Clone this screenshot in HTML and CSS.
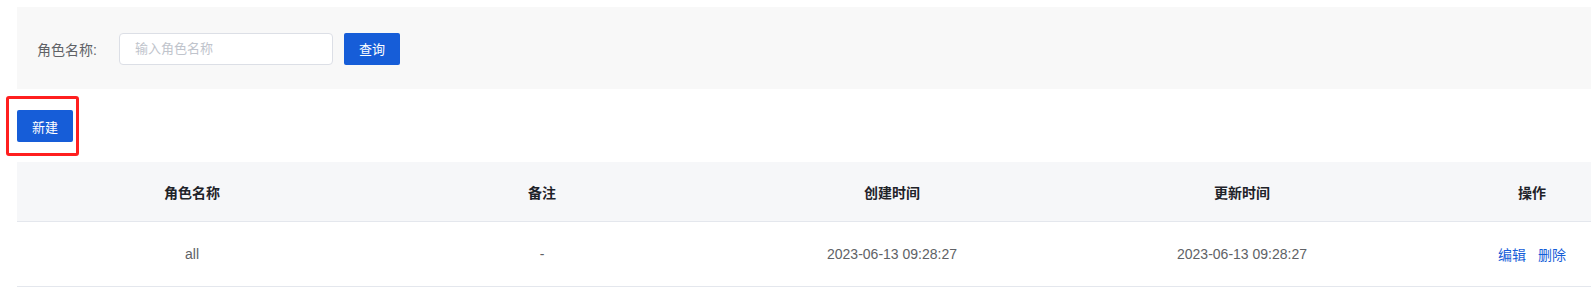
FILE: index.html
```html
<!DOCTYPE html>
<html lang="zh-CN">
<head>
  <title>角色管理</title>
  <meta charset="UTF-8">
  <link rel="stylesheet" href="styles.css">
</head>
<body>
  <div class="page">
    <div class="search-panel">
      <label class="search-label" for="role-name">角色名称:</label>
      <input type="text" id="role-name" class="search-input" placeholder="输入角色名称">
      <button type="button" class="btn">查询</button>
    </div>

    <div class="toolbar">
      <button type="button" class="btn">新建</button>
      <span class="highlight-box"></span>
    </div>

    <table class="role-table">
      <colgroup>
        <col class="col-main">
        <col class="col-main">
        <col class="col-main">
        <col class="col-main">
        <col class="col-ops">
      </colgroup>
      <thead>
        <tr>
          <th>角色名称</th>
          <th>备注</th>
          <th>创建时间</th>
          <th>更新时间</th>
          <th>操作</th>
        </tr>
      </thead>
      <tbody>
        <tr>
          <td>all</td>
          <td>-</td>
          <td>2023-06-13 09:28:27</td>
          <td>2023-06-13 09:28:27</td>
          <td class="ops"><a href="#">编辑</a><a href="#">删除</a></td>
        </tr>
      </tbody>
    </table>
  </div>
</body>
</html>
```

FILE: styles.css
```css
:root {
  --primary: #165dd8;
  --text: #606266;
  --heading: #1f2329;
  --border: #e4e7ed;
  --panel-bg: #f8f8f8;
  --head-bg: #f6f7f9;
}

html, body {
  margin: 0;
  padding: 0;
  overflow: hidden;
  background: #ffffff;
}

body {
  font-family: "Liberation Sans", Arial, "Noto Sans CJK SC", sans-serif;
  font-size: 14px;
  color: var(--text);
}

.page {
  width: 1630px;
  padding: 7px 0 0 17px;
}

.search-panel {
  display: flex;
  align-items: center;
  height: 82px;
  padding: 1px 0 0 20px;
  box-sizing: border-box;
  background-color: var(--panel-bg);
}

.search-label {
  font-size: 14px;
  color: var(--text);
  width: 82px;
}

.search-input {
  width: 214px;
  height: 32px;
  box-sizing: border-box;
  padding: 0 15px;
  border: 1px solid #dcdfe6;
  border-radius: 4px;
  background: #ffffff;
  font-family: inherit;
  font-size: 13px;
  color: var(--text);
  outline: none;
  margin-right: 11px;
}

.search-input::placeholder {
  color: #c0c4cc;
}

.btn {
  height: 32px;
  width: 56px;
  padding: 0;
  border: none;
  border-radius: 2px;
  background-color: var(--primary);
  color: #ffffff;
  font-family: inherit;
  font-size: 13px;
  cursor: pointer;
}

.toolbar {
  position: relative;
  padding: 21px 0 20px;
}

.toolbar .btn {
  display: block;
}

.highlight-box {
  position: absolute;
  left: -11px;
  top: 7px;
  width: 73px;
  height: 60px;
  box-sizing: border-box;
  border: 3px solid #ff1f1f;
  border-radius: 3px;
}

.role-table {
  width: 1630px;
  border-collapse: collapse;
  table-layout: fixed;
}

.col-main {
  width: 350px;
}

.col-ops {
  width: 230px;
}

.role-table th {
  height: 59px;
  padding: 0;
  background-color: var(--head-bg);
  color: var(--heading);
  font-weight: bold;
  font-size: 14px;
  text-align: center;
  border-bottom: 1px solid var(--border);
}

.role-table td {
  height: 64px;
  padding: 0;
  text-align: center;
  font-size: 14px;
  color: var(--text);
  border-bottom: 1px solid var(--border);
}

.ops a {
  color: var(--primary);
  text-decoration: none;
  margin: 0 6px;
}
```
